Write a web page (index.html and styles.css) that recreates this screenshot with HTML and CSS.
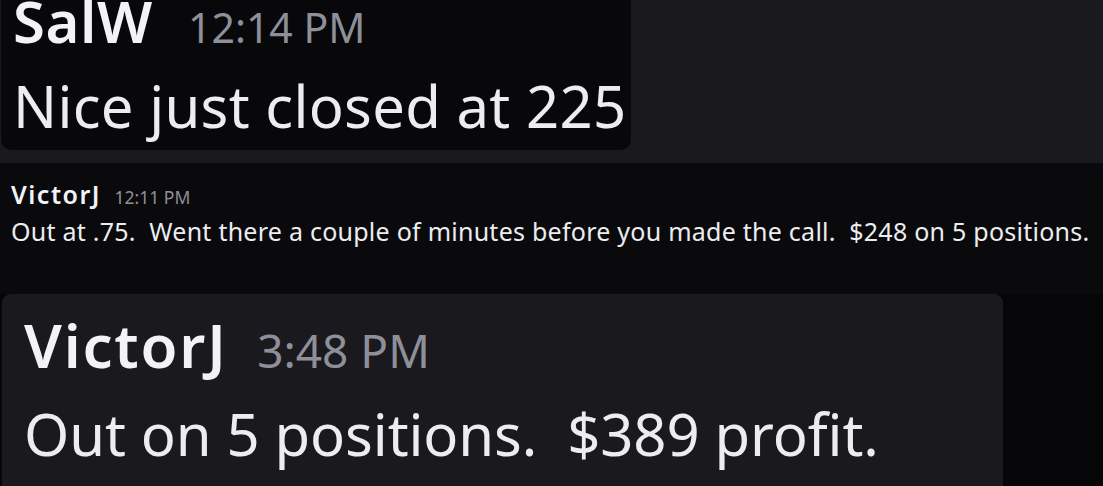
FILE: index.html
```html
<!DOCTYPE html>
<html lang="en">
<head>
    <meta charset="UTF-8">
    <meta name="viewport" content="width=device-width, initial-scale=1.0">
    <title>Trade messages</title>
    <link rel="stylesheet" href="styles.css">
</head>
<body>
    <!-- first screenshot: dark card on grey -->
    <section class="shot shot-top">
        <div class="card card-dark">
            <div class="msg-head">
                <span class="user">SalW</span>
                <span class="time">12:14 PM</span>
            </div>
            <div class="msg-body">Nice just closed at 225</div>
        </div>
    </section>

    <!-- second screenshot: normal chat line -->
    <section class="shot shot-mid">
        <div class="msg-head">
            <span class="user">VictorJ</span>
            <span class="time">12:11 PM</span>
        </div>
        <div class="msg-body">Out at .75.&nbsp; Went there a couple of minutes before you made the call.&nbsp; $248 on 5 positions.</div>
    </section>

    <!-- third screenshot: grey card on black -->
    <section class="shot shot-bottom">
        <div class="card card-grey">
            <div class="msg-head">
                <span class="user">VictorJ</span>
                <span class="time">3:48 PM</span>
            </div>
            <div class="msg-body">Out on 5 positions.&nbsp; $389 profit.</div>
        </div>
    </section>
</body>
</html>
```
FILE: styles.css
```css
body {
    margin: 0;
    width: 1103px;
    height: 486px;
    overflow: hidden;
    background-color: #060608;
    font-family: 'Noto Sans', 'Open Sans', sans-serif;
    color: #ecedf0;
}

.shot {
    box-sizing: border-box;
    display: flow-root;
}

.card {
    display: flow-root;
    box-sizing: border-box;
}

.msg-head,
.msg-body {
    line-height: 1;
    white-space: nowrap;
}

.user {
    font-weight: 600;
    color: #f2f3f5;
}

.time {
    color: #8e9099;
}

/* top */
.shot-top {
    height: 163px;
    background-color: #1a1a1e;
    padding-left: 1px;
}

.card-dark {
    width: 630px;
    height: 150px;
    background-color: #08080a;
    border-radius: 0 0 10px 10px;
    padding-left: 12px;
}

.card-dark .msg-head {
    font-size: 58px;
    line-height: 0.72;
}

.card-dark .user {
    letter-spacing: 0.6px;
}

.card-dark .time {
    font-size: 41px;
    margin-left: 20px;
}

.card-dark .msg-body {
    margin-top: 34px;
    font-size: 58px;
    letter-spacing: 0.3px;
}

/* middle */
.shot-mid {
    height: 131px;
    background-color: #0a0a0c;
    padding: 19px 11px 0;
}

.shot-mid .msg-head {
    font-size: 25px;
}

.shot-mid .user {
    letter-spacing: 1.5px;
}

.shot-mid .time {
    font-size: 17.5px;
    margin-left: 7px;
}

.shot-mid .msg-body {
    margin-top: 12px;
    font-size: 25px;
    letter-spacing: 0.25px;
}

/* bottom */
.shot-bottom {
    padding-left: 2px;
}

.card-grey {
    width: 1001px;
    height: 200px;
    background-color: #1a1a1e;
    border-radius: 9px 9px 0 0;
    padding: 21px 0 0 22px;
}

.card-grey .msg-head {
    font-size: 60px;
}

.card-grey .user {
    letter-spacing: 1.8px;
}

.card-grey .time {
    font-size: 46px;
    margin-left: 14px;
}

.card-grey .msg-body {
    margin-top: 30px;
    font-size: 58px;
    letter-spacing: -0.1px;
}
```
